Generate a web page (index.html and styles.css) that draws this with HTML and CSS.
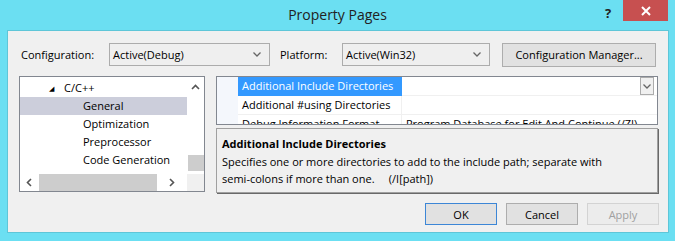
FILE: index.html
```html
<!DOCTYPE html>
<html lang="en">
<head>
    <meta charset="UTF-8" />
    <title>Property Pages</title>
    <link rel="stylesheet" href="styles.css">
</head>
<body>

<div class="window">
    <!-- Barra de titulo -->
    <div class="titlebar">
        <span class="title">Property Pages</span>
        <span class="help">?</span>
        <span class="close">
            <svg width="10" height="10" viewBox="0 0 10 10"><path d="M1 1 L9 9 M9 1 L1 9" stroke="#fff" stroke-width="2"/></svg>
        </span>
    </div>

    <div class="content">
        <div class="config-row">
            <span class="label">Configuration:</span>
            <div class="combo combo-config">
                <span>Active(Debug)</span>
                <svg class="chev" width="8" height="5" viewBox="0 0 8 5"><path d="M0.5 0.5 L4 4 L7.5 0.5" stroke="#666" stroke-width="1.3" fill="none"/></svg>
            </div>
            <span class="label label-platform">Platform:</span>
            <div class="combo combo-platform">
                <span>Active(Win32)</span>
                <svg class="chev" width="8" height="5" viewBox="0 0 8 5"><path d="M0.5 0.5 L4 4 L7.5 0.5" stroke="#666" stroke-width="1.3" fill="none"/></svg>
            </div>
            <button class="btn btn-manager">Configuration Manager...</button>
        </div>

        <div class="main">
            <!-- Arbol de propiedades -->
            <div class="tree">
                <div class="tree-body">
                    <div class="tree-items">
                        <div class="tree-item parent"><span class="tri">&#9698;</span>C/C++</div>
                        <div class="tree-item child selected">General</div>
                        <div class="tree-item child">Optimization</div>
                        <div class="tree-item child">Preprocessor</div>
                        <div class="tree-item child">Code Generation</div>
                    </div>
                    <div class="vscroll">
                        <svg class="arrow-up" width="9" height="6" viewBox="0 0 9 6"><path d="M1 5 L4.5 1.5 L8 5" stroke="#555" stroke-width="1.6" fill="none"/></svg>
                        <div class="vthumb"></div>
                    </div>
                </div>
                <div class="hscroll">
                    <svg width="6" height="9" viewBox="0 0 6 9"><path d="M5 1 L1.5 4.5 L5 8" stroke="#555" stroke-width="1.6" fill="none"/></svg>
                    <div class="hthumb"></div>
                    <svg width="6" height="9" viewBox="0 0 6 9"><path d="M1 1 L4.5 4.5 L1 8" stroke="#555" stroke-width="1.6" fill="none"/></svg>
                    <div class="corner"></div>
                </div>
            </div>

            <div class="right">
                <!-- Tabla de propiedades -->
                <div class="grid">
                    <div class="grid-row">
                        <div class="margin"></div>
                        <div class="name selected">Additional Include Directories</div>
                        <div class="value">
                            <span class="dropbtn">
                                <svg width="8" height="5" viewBox="0 0 8 5"><path d="M0.5 0.5 L4 4 L7.5 0.5" stroke="#666" stroke-width="1.3" fill="none"/></svg>
                            </span>
                        </div>
                    </div>
                    <div class="grid-row">
                        <div class="margin"></div>
                        <div class="name">Additional #using Directories</div>
                        <div class="value"></div>
                    </div>
                    <div class="grid-row">
                        <div class="margin"></div>
                        <div class="name">Debug Information Format</div>
                        <div class="value">Program Database for Edit And Continue (/ZI)</div>
                    </div>
                </div>

                <div class="desc">
                    <div class="desc-title">Additional Include Directories</div>
                    <div class="desc-text">Specifies one or more directories to add to the include path; separate with<br>semi-colons if more than one.&nbsp;&nbsp;&nbsp;&nbsp;&nbsp;(/I[path])</div>
                </div>
            </div>
        </div>

        <div class="buttons">
            <button class="btn btn-ok">OK</button>
            <button class="btn">Cancel</button>
            <button class="btn btn-disabled">Apply</button>
        </div>
    </div>
</div>

</body>
</html>
```

FILE: styles.css
```css
body {
    margin: 0;
    font-family: "Segoe UI", "Open Sans", sans-serif;
    font-size: 11px;
    color: #000;
}

.window {
    width: 675px;
    height: 241px;
    background-color: #6bdff2;
    display: flex;
    flex-direction: column;
    box-sizing: border-box;
}

/* Barra de titulo */
.titlebar {
    height: 30px;
    position: relative;
    display: flex;
    justify-content: center;
    align-items: center;
}

.title {
    font-size: 14px;
    color: #222;
    margin-top: -2px;
}

.help {
    position: absolute;
    left: 605px;
    top: 4px;
    font-size: 13px;
    font-weight: bold;
    color: #222;
}

.close {
    position: absolute;
    left: 623px;
    top: 0;
    width: 45px;
    height: 21px;
    background-color: #c75050;
    display: flex;
    justify-content: center;
    align-items: center;
}

.content {
    flex: 1;
    margin: 0 6px 8px 7px;
    background-color: #f0f0f0;
    border: 1px solid #5ec6d8;
    padding: 12px 9px 0 11px;
    display: flex;
    flex-direction: column;
}

/* Fila de configuracion */
.config-row {
    display: flex;
    align-items: center;
    height: 23px;
}

.label {
    width: 88px;
    padding-left: 2px;
}

.label-platform {
    width: 62px;
    padding-left: 10px;
}

.combo {
    height: 23px;
    box-sizing: border-box;
    border: 1px solid #acacac;
    background-color: #efefef;
    display: flex;
    align-items: center;
    justify-content: space-between;
    padding: 0 8px 0 3px;
}

.combo-config {
    width: 161px;
}

.combo-platform {
    width: 148px;
}

.btn {
    font-family: "Segoe UI", "Open Sans", sans-serif;
    font-size: 11px;
    height: 22px;
    box-sizing: border-box;
    background-color: #e1e1e1;
    border: 1px solid #adadad;
    padding: 0;
    color: #000;
}

.btn-manager {
    width: 154px;
    height: 24px;
    margin-left: 12px;
}

/* Zona central */
.main {
    display: flex;
    margin-top: 10px;
    height: 117px;
}

.tree {
    width: 186px;
    height: 116px;
    box-sizing: border-box;
    border: 1px solid #828790;
    background-color: #fff;
    display: flex;
    flex-direction: column;
}

.tree-body {
    flex: 1;
    display: flex;
}

.tree-items {
    flex: 1;
    padding-top: 2px;
}

.tree-item {
    height: 18px;
    line-height: 17px;
    white-space: nowrap;
}

.tree-item.parent {
    padding-left: 29px;
}

.tri {
    font-size: 7px;
    display: inline-block;
    width: 15px;
    vertical-align: 1px;
}

.tree-item.child {
    padding-left: 63px;
}

.tree-item.selected {
    background-color: #cccedb;
}

.vscroll {
    width: 17px;
    background-color: #fff;
    position: relative;
}

.arrow-up {
    display: block;
    margin: 7px auto 0;
}

.vthumb {
    position: absolute;
    left: 1px;
    right: 0;
    top: 78px;
    height: 16px;
    background-color: #cdcdcd;
}

.hscroll {
    height: 17px;
    display: flex;
    align-items: center;
    background-color: #fff;
}

.hscroll svg {
    margin: 0 6px 0 6px;
}

.hthumb {
    width: 118px;
    height: 17px;
    background-color: #cdcdcd;
    margin: 0 6px 0 1px;
}

.corner {
    width: 17px;
    height: 17px;
    background-color: #f0f0f0;
    margin-left: auto;
}

.right {
    margin-left: 11px;
    width: 442px;
    display: flex;
    flex-direction: column;
}

/* Tabla */
.grid {
    height: 50px;
    box-sizing: border-box;
    border: 1px solid #828790;
    background-color: #fff;
    overflow: hidden;
}

.grid-row {
    display: flex;
    height: 19px;
    line-height: 17px;
}

.margin {
    width: 21px;
    background-color: #f4f7fc;
}

.name {
    width: 164px;
    padding-left: 4px;
    box-sizing: border-box;
    border-bottom: 1px solid #f0f0f0;
    border-right: 1px solid #f0f0f0;
    white-space: nowrap;
}

.name.selected {
    background-color: #3399ff;
    color: #fff;
    border-color: #3399ff;
}

.value {
    flex: 1;
    padding-left: 4px;
    border-bottom: 1px solid #f0f0f0;
    white-space: nowrap;
    overflow: hidden;
    display: flex;
    justify-content: flex-end;
}

.grid-row:nth-child(3) .value {
    justify-content: flex-start;
}

.dropbtn {
    width: 14px;
    height: 18px;
    box-sizing: border-box;
    border: 1px solid #acacac;
    background-color: #f0f0f0;
    display: flex;
    align-items: center;
    justify-content: center;
    margin-right: 3px;
}

/* Descripcion */
.desc {
    margin-top: 3px;
    height: 66px;
    box-sizing: border-box;
    border: 1px solid #a0a0a0;
    box-shadow: 1px 1px 0 #696969;
    padding: 6px 6px 0 5px;
    line-height: 17px;
}

.desc-title {
    font-weight: bold;
    margin-bottom: 1px;
}

/* Botones inferiores */
.buttons {
    display: flex;
    justify-content: flex-end;
    gap: 9px;
    margin-top: 10px;
    padding-right: 0;
}

.buttons .btn {
    width: 72px;
}

.btn-ok {
    border-color: #3c86d6;
}

.btn-disabled {
    color: #a0a0a0;
    background-color: #ececec;
    border-color: #d3d3d3;
}
```
